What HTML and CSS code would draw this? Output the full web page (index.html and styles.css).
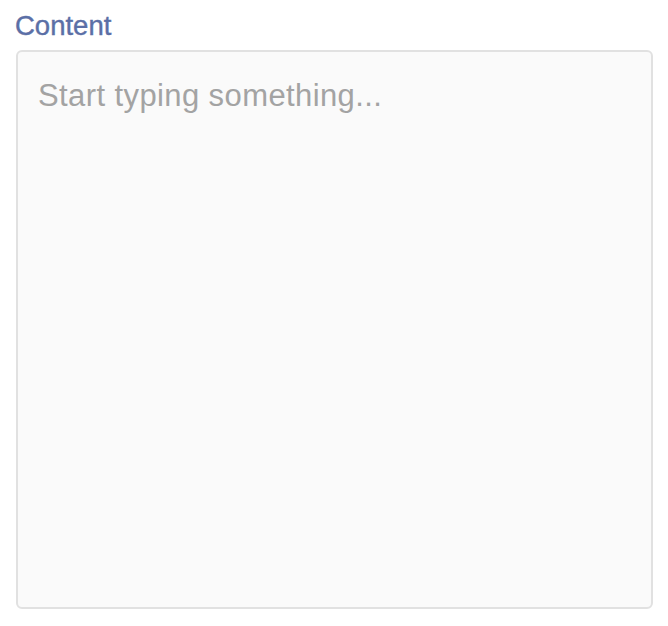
FILE: index.html
```html
<!DOCTYPE html>
<html>
<head>
<meta charset="utf-8">
<link rel="stylesheet" href="styles.css">
</head>
<body>
<div class="field">
  <label class="field-label" for="content">Content</label>
  <textarea id="content" class="field-input" placeholder="Start typing something..."></textarea>
</div>
</body>
</html>
```
FILE: styles.css
```css
html, body {
  margin: 0;
  padding: 0;
  background: #ffffff;
}
.field {
  display: flex;
  flex-direction: column;
  padding: 11px 16px 0 16px;
  width: 637px;
}
.field-label {
  font-family: "Liberation Sans", Arial, sans-serif;
  font-size: 27.5px;
  line-height: 30px;
  color: #5b6fa6;
  margin-left: -1px;
  margin-bottom: 9px;
  -webkit-text-stroke: 0.4px #5b6fa6;
}
.field-input {
  box-sizing: border-box;
  width: 637px;
  height: 559px;
  border: 2px solid #e1e1e1;
  border-radius: 6px;
  background: #fafafa;
  padding: 26px 20px;
  font-family: "Liberation Sans", Arial, sans-serif;
  font-size: 31px;
  letter-spacing: 0.4px;
  line-height: 36px;
  color: #333;
  resize: none;
  outline: none;
  margin: 0;
}
.field-input::placeholder {
  color: #a3a3a3;
  opacity: 1;
}
```
